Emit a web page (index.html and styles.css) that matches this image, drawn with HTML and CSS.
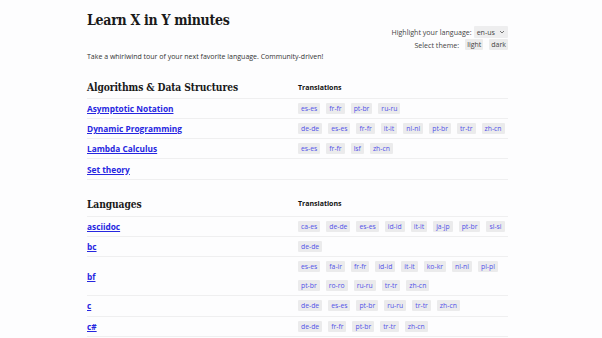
FILE: index.html
```html
<!DOCTYPE html>
<html lang="en">
<head>
  <meta charset="UTF-8" />
  <meta name="viewport" content="width=device-width, initial-scale=1" />
  <title>Learn X in Y minutes</title>
  <link rel="stylesheet" href="styles.css">
</head>
<body>

  <div class="page">

    <!-- Cabecera -->
    <header class="top">
      <h1>Learn X in Y minutes</h1>
      <div class="prefs">
        <div class="pref-row">
          <label for="lang">Highlight your language:</label>
          <span class="select" id="lang">en-us <svg width="6" height="4" viewBox="0 0 6 4"><path d="M1 1l2 2 2-2" fill="none" stroke="#555" stroke-width="0.8"/></svg></span>
        </div>
        <div class="pref-row">
          <span>Select theme:</span>
          <button class="theme-btn">light</button>
          <button class="theme-btn">dark</button>
        </div>
      </div>
    </header>

    <p class="tagline">Take a whirlwind tour of your next favorite language. Community-driven!</p>

    <!-- Algoritmos -->
    <section class="group">
      <div class="group-head">
        <h2>Algorithms &amp; Data Structures</h2>
        <span class="col-title">Translations</span>
      </div>
      <div class="row">
        <a href="#">Asymptotic Notation</a>
        <div class="tags"><a class="tag">es-es</a><a class="tag">fr-fr</a><a class="tag">pt-br</a><a class="tag">ru-ru</a></div>
      </div>
      <div class="row">
        <a href="#">Dynamic Programming</a>
        <div class="tags"><a class="tag">de-de</a><a class="tag">es-es</a><a class="tag">fr-fr</a><a class="tag">it-it</a><a class="tag">nl-nl</a><a class="tag">pt-br</a><a class="tag">tr-tr</a><a class="tag">zh-cn</a></div>
      </div>
      <div class="row">
        <a href="#">Lambda Calculus</a>
        <div class="tags"><a class="tag">es-es</a><a class="tag">fr-fr</a><a class="tag">lsf</a><a class="tag">zh-cn</a></div>
      </div>
      <div class="row">
        <a href="#">Set theory</a>
        <div class="tags"></div>
      </div>
    </section>

    <!-- Lenguajes -->
    <section class="group group-langs">
      <div class="group-head">
        <h2>Languages</h2>
        <span class="col-title">Translations</span>
      </div>
      <div class="row">
        <a href="#">asciidoc</a>
        <div class="tags"><a class="tag">ca-es</a><a class="tag">de-de</a><a class="tag">es-es</a><a class="tag">id-id</a><a class="tag">it-it</a><a class="tag">ja-jp</a><a class="tag">pt-br</a><a class="tag">sl-si</a></div>
      </div>
      <div class="row">
        <a href="#">bc</a>
        <div class="tags"><a class="tag">de-de</a></div>
      </div>
      <div class="row">
        <a href="#">bf</a>
        <div class="tags"><a class="tag">es-es</a><a class="tag">fa-ir</a><a class="tag">fr-fr</a><a class="tag">id-id</a><a class="tag">it-it</a><a class="tag">ko-kr</a><a class="tag">nl-nl</a><a class="tag">pl-pl</a><a class="tag">pt-br</a><a class="tag">ro-ro</a><a class="tag">ru-ru</a><a class="tag">tr-tr</a><a class="tag">zh-cn</a></div>
      </div>
      <div class="row">
        <a href="#">c</a>
        <div class="tags"><a class="tag">de-de</a><a class="tag">es-es</a><a class="tag">pt-br</a><a class="tag">ru-ru</a><a class="tag">tr-tr</a><a class="tag">zh-cn</a></div>
      </div>
      <div class="row">
        <a href="#">c#</a>
        <div class="tags"><a class="tag">de-de</a><a class="tag">fr-fr</a><a class="tag">pt-br</a><a class="tag">tr-tr</a><a class="tag">zh-cn</a></div>
      </div>
    </section>

  </div>

</body>
</html>
```

FILE: styles.css
```css
html, body {
  margin: 0;
  padding: 0;
  background-color: #fdfdfe;
  color: #1a1a1a;
  font-family: 'Open Sans', sans-serif;
  font-size: 7px;
}
.page {
  width: 421px;
  margin-left: 87px;
}
.top {
  display: flex;
  justify-content: space-between;
  align-items: flex-start;
}
h1 {
  font-family: 'DejaVu Serif Condensed', 'DejaVu Serif', serif;
  font-stretch: condensed;
  font-size: 14px;
  font-weight: bold;
  margin: 12px 0 0;
  letter-spacing: -0.3px;
}
.prefs {
  margin-top: 26px;
  display: flex;
  flex-direction: column;
  align-items: flex-end;
  gap: 1px;
  color: #444;
  font-size: 7.1px;
}
.pref-row {
  display: flex;
  align-items: center;
  gap: 2px;
}
.select {
  display: inline-flex;
  align-items: center;
  gap: 4px;
  background-color: #eeeeef;
  padding: 1px 3px;
  border-radius: 1px;
}
.theme-btn {
  font-family: inherit;
  font-size: 7px;
  color: #444;
  background-color: #ececec;
  border: none;
  padding: 1px 2px;
  margin-left: 4px;
  border-radius: 1px;
}
.tagline {
  margin: 2px 0 0;
  color: #333;
}
.group {
  margin-top: 20px;
}
.group-head, .row {
  display: grid;
  grid-template-columns: 211px 1fr;
  align-items: center;
  border-bottom: 1px solid #efeff0;
}
.group-head {
  padding-bottom: 4.5px;
}
.group-langs {
  margin-top: 18px;
}
.group-langs .group-head {
  padding-bottom: 6px;
}
h2 {
  font-family: 'DejaVu Serif Condensed', 'DejaVu Serif', serif;
  font-stretch: condensed;
  font-size: 10.2px;
  font-weight: bold;
  margin: 0;
  letter-spacing: -0.1px;
}
.col-title {
  font-weight: bold;
  color: #111;
}
.row {
  min-height: 19.3px;
}
.row > a {
  color: #2626e0;
  font-weight: bold;
  font-size: 8.3px;
}
.tags {
  display: flex;
  flex-wrap: wrap;
  gap: 8px 6px;
  padding: 4px 0;
}
.tag {
  background-color: #ebebec;
  color: #5252e8;
  padding: 1px 3px;
  border-radius: 1px;
  font-size: 6.8px;
  line-height: 9px;
}
```
